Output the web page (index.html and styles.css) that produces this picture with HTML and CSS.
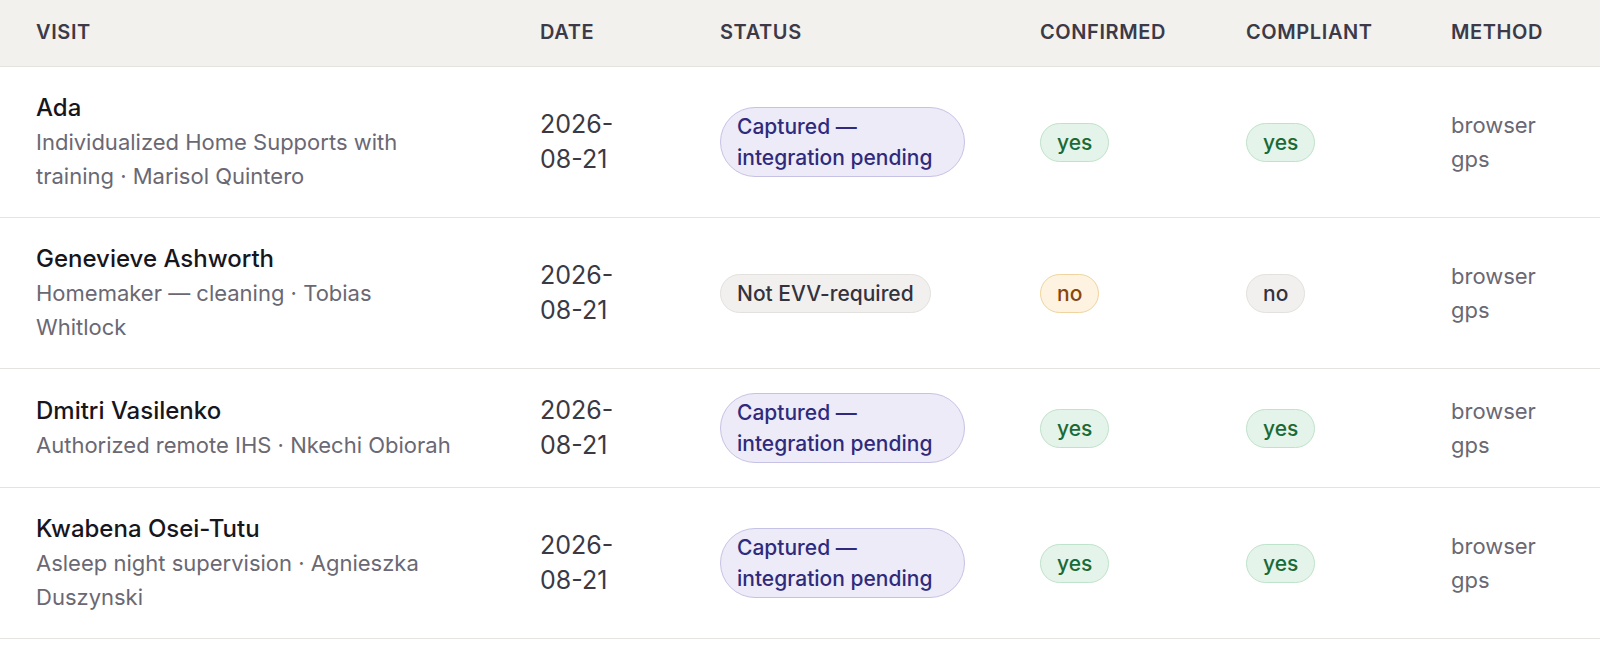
FILE: index.html
```html
<!DOCTYPE html>
<html lang="en">
<head>
  <meta charset="UTF-8">
  <meta name="viewport" content="width=device-width, initial-scale=1.0">
  <title>EVV visits</title>
  <link rel="stylesheet" href="styles.css">
</head>
<body>
  <table class="visits">
    <colgroup>
      <col class="c-visit">
      <col class="c-date">
      <col class="c-status">
      <col class="c-confirmed">
      <col class="c-compliant">
      <col class="c-method">
    </colgroup>
    <thead>
      <tr>
        <th>Visit</th>
        <th>Date</th>
        <th>Status</th>
        <th>Confirmed</th>
        <th>Compliant</th>
        <th>Method</th>
      </tr>
    </thead>
    <tbody>
      <tr>
        <td>
          <div class="name">Ada</div>
          <div class="sub">Individualized Home Supports with training · Marisol Quintero</div>
        </td>
        <td class="date">2026-08-21</td>
        <td><span class="pill pill-captured">Captured — integration pending</span></td>
        <td><span class="pill pill-yes">yes</span></td>
        <td><span class="pill pill-yes">yes</span></td>
        <td class="method">browser gps</td>
      </tr>
      <tr>
        <td>
          <div class="name">Genevieve Ashworth</div>
          <div class="sub">Homemaker — cleaning · Tobias Whitlock</div>
        </td>
        <td class="date">2026-08-21</td>
        <td><span class="pill pill-muted">Not EVV-required</span></td>
        <td><span class="pill pill-warn">no</span></td>
        <td><span class="pill pill-muted">no</span></td>
        <td class="method">browser gps</td>
      </tr>
      <tr>
        <td>
          <div class="name">Dmitri Vasilenko</div>
          <div class="sub">Authorized remote IHS · Nkechi Obiorah</div>
        </td>
        <td class="date">2026-08-21</td>
        <td><span class="pill pill-captured">Captured — integration pending</span></td>
        <td><span class="pill pill-yes">yes</span></td>
        <td><span class="pill pill-yes">yes</span></td>
        <td class="method">browser gps</td>
      </tr>
      <tr>
        <td>
          <div class="name">Kwabena Osei-Tutu</div>
          <div class="sub">Asleep night supervision · Agnieszka Duszynski</div>
        </td>
        <td class="date">2026-08-21</td>
        <td><span class="pill pill-captured">Captured — integration pending</span></td>
        <td><span class="pill pill-yes">yes</span></td>
        <td><span class="pill pill-yes">yes</span></td>
        <td class="method">browser gps</td>
      </tr>
    </tbody>
  </table>
</body>
</html>
```

FILE: styles.css
```css
body {
  margin: 0;
  background: #fff;
  font-family: Inter, "Noto Sans", sans-serif;
  color: #1d1c24;
}
.visits {
  width: 1600px;
  border-collapse: collapse;
  table-layout: fixed;
}
.c-visit { width: 540px; }
.c-date { width: 180px; }
.c-status { width: 320px; }
.c-confirmed { width: 206px; }
.c-compliant { width: 205px; }
.c-method { width: 149px; }
th {
  background: #f2f1ee;
  text-align: left;
  text-transform: uppercase;
  font-size: 20px;
  font-weight: 600;
  letter-spacing: 0.6px;
  color: #3c3a48;
  line-height: 24px;
  padding: 20px 10px 22px 0;
  border-bottom: 1px solid #e4e3e0;
}
td {
  vertical-align: middle;
  padding: 24px 20px 24px 0;
  border-bottom: 1px solid #e4e3e0;
  font-size: 22px;
  line-height: 34px;
}
th:first-child,
td:first-child {
  padding-left: 36px;
  padding-right: 79px;
}
td:nth-child(2) {
  padding-right: 85px;
}
td:nth-child(3) {
  padding-right: 75px;
}
td:nth-child(6) {
  padding-right: 49px;
}
.name {
  font-size: 24px;
  font-weight: 500;
  color: #17161d;
}
.sub {
  color: #6a6873;
}
.date {
  font-size: 25px;
  line-height: 35px;
  color: #3a3944;
}
.method {
  color: #6a6873;
}
.pill {
  display: inline-block;
  font-size: 21px;
  font-weight: 500;
  line-height: 31px;
  padding: 3px 16px;
  border-radius: 40px;
  border: 1px solid transparent;
}
.pill-captured {
  background: #ecebf7;
  border-color: #c6c2e6;
  color: #2f2a7c;
}
.pill-yes {
  background: #e5f4ea;
  border-color: #bfe2ca;
  color: #1b6a36;
}
.pill-warn {
  background: #fdf3e0;
  border-color: #efd49f;
  color: #88460f;
}
.pill-muted {
  background: #f1f0ee;
  border-color: #e3e1dd;
  color: #34323d;
}
```
